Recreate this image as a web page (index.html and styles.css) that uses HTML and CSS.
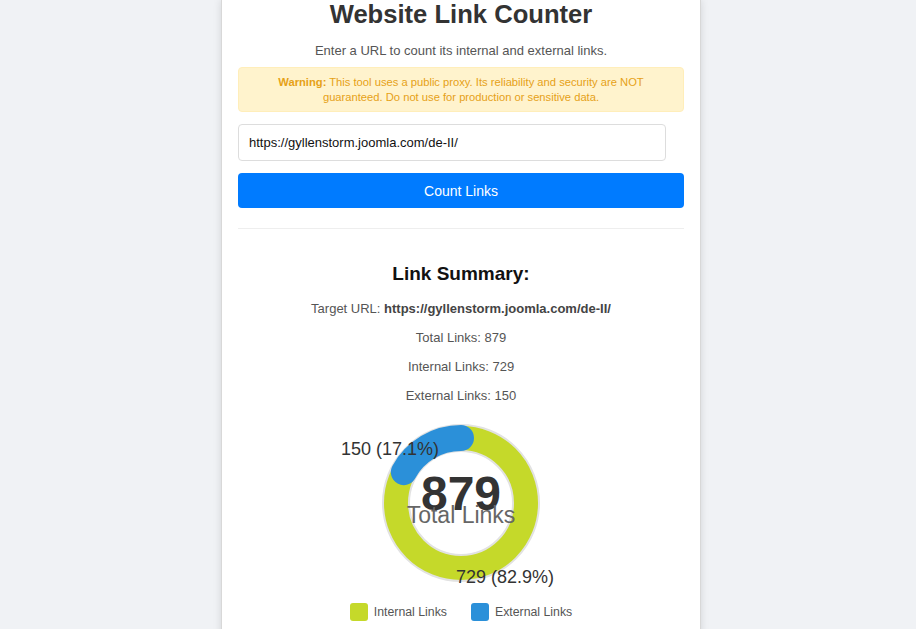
FILE: index.html
```html
<!DOCTYPE html>
<html lang="en">
<head>
<meta charset="utf-8">
<title>Website Link Counter</title>
<link rel="stylesheet" href="styles.css">
</head>
<body>
<main class="card">
  <h1 class="title">Website Link Counter</h1>
  <p class="subtitle">Enter a URL to count its internal and external links.</p>
  <div class="warning"><strong>Warning:</strong> This tool uses a public proxy. Its reliability and security are NOT guaranteed. Do not use for production or sensitive data.</div>
  <input class="url-input" type="text" value="https://gyllenstorm.joomla.com/de-II/">
  <button class="count-btn" type="button">Count Links</button>
  <hr class="divider">
  <section class="summary">
    <h2 class="summary-title">Link Summary:</h2>
    <p class="stat">Target URL: <strong>https://gyllenstorm.joomla.com/de-II/</strong></p>
    <p class="stat">Total Links: 879</p>
    <p class="stat">Internal Links: 729</p>
    <p class="stat">External Links: 150</p>
    <div class="chart">
      <svg class="donut" width="160" height="160" viewBox="0 0 160 160">
        <circle cx="80" cy="80" r="65" fill="none" stroke="#c5d92a" stroke-width="26"/>
        <circle cx="80" cy="80" r="78" fill="none" stroke="#e2e2e2" stroke-width="2"/>
        <circle cx="80" cy="80" r="52" fill="none" stroke="#e2e2e2" stroke-width="2"/>
        <path d="M22.82 49.09 A65 65 0 0 1 80 15" fill="none" stroke="#2b90d9" stroke-width="26" stroke-linecap="round"/>
      </svg>
      <div class="center-text">
        <span class="center-num">879</span>
        <span class="center-label">Total Links</span>
      </div>
      <span class="slice-label ext-label">150 (17.1%)</span>
      <span class="slice-label int-label">729 (82.9%)</span>
    </div>
    <div class="legend">
      <span class="legend-item"><span class="swatch swatch-int"></span>Internal Links</span>
      <span class="legend-item"><span class="swatch swatch-ext"></span>External Links</span>
    </div>
  </section>
</main>
</body>
</html>
```
FILE: styles.css
```css
* { box-sizing: border-box; }
html, body { height: 100%; }
body {
  margin: 0;
  padding-left: 6px;
  background: #f0f2f5;
  font-family: "Liberation Sans", Arial, sans-serif;
  display: flex;
  justify-content: center;
  overflow: hidden;
}
.card {
  width: 480px;
  background: #fff;
  padding: 0 16px;
  box-shadow: 0 0 8px rgba(0,0,0,0.12);
  border-left: 1px solid #d8d8d8;
  border-right: 1px solid #d8d8d8;
  min-height: 700px;
}
.title {
  margin: 0;
  font-size: 25.6px;
  line-height: 28px;
  font-weight: bold;
  color: #333;
  text-align: center;
}
.subtitle {
  margin: 14px 0 0;
  font-size: 13px;
  line-height: 18px;
  color: #555;
  text-align: center;
}
.warning {
  margin-top: 7px;
  background: #fff3cd;
  border: 1px solid #ffeeba;
  border-radius: 4px;
  padding: 7px 12px 6px;
  font-size: 11.2px;
  line-height: 15px;
  color: #e6a117;
  text-align: center;
}
.url-input {
  display: block;
  margin-top: 12px;
  width: 428px;
  height: 37px;
  border: 1px solid #ddd;
  border-radius: 4px;
  padding: 0 10px;
  font-family: "Liberation Sans", Arial, sans-serif;
  font-size: 13px;
  color: #111;
  background: #fff;
}
.count-btn {
  display: block;
  margin-top: 12px;
  width: 100%;
  height: 35px;
  border: none;
  border-radius: 4px;
  background: #007bff;
  color: #fff;
  font-family: "Liberation Sans", Arial, sans-serif;
  font-size: 14px;
}
.divider {
  margin: 20px 0 0;
  border: none;
  border-top: 1px solid #eee;
}
.summary { text-align: center; }
.summary-title {
  margin: 34px 0 16px;
  font-size: 19px;
  line-height: 22px;
  font-weight: bold;
  color: #111;
}
.stat {
  margin: 0 0 13px;
  font-size: 13px;
  line-height: 16px;
  color: #555;
}
.stat strong { color: #444; }
.chart {
  position: relative;
  height: 180px;
  margin-top: -4px;
  display: flex;
  align-items: center;
  justify-content: center;
}
.center-text {
  position: absolute;
  left: 0;
  right: 0;
  top: 55px;
  display: flex;
  flex-direction: column;
  align-items: center;
}
.center-num {
  font-size: 48px;
  line-height: 52px;
  font-weight: bold;
  color: #333;
}
.center-label {
  margin-top: -18px;
  font-size: 23px;
  line-height: 27px;
  color: #666;
}
.slice-label {
  position: absolute;
  font-size: 18px;
  line-height: 20px;
  color: #333;
}
.ext-label { left: 103px; top: 26px; }
.int-label { left: 218px; top: 154px; }
.legend {
  margin-top: 10px;
  display: flex;
  justify-content: center;
  gap: 24px;
  font-size: 12.3px;
  color: #555;
}
.legend-item {
  display: flex;
  align-items: center;
  gap: 6px;
  line-height: 18px;
}
.swatch {
  width: 18px;
  height: 18px;
  border-radius: 3px;
}
.swatch-int { background: #c5d92a; }
.swatch-ext { background: #2b90d9; }
```
